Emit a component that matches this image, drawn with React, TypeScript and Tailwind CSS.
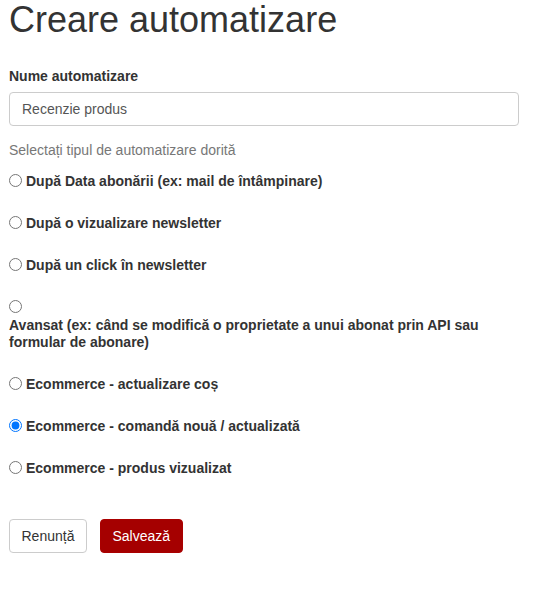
import React from "react";

const options = [
  { label: "După Data abonării (ex: mail de întâmpinare)" },
  { label: "După o vizualizare newsletter" },
  { label: "După un click în newsletter" },
  { label: "Avansat (ex: când se modifică o proprietate a unui abonat prin API sau formular de abonare)" },
  { label: "Ecommerce - actualizare coș" },
  { label: "Ecommerce - comandă nouă / actualizată", checked: true },
  { label: "Ecommerce - produs vizualizat" },
];

export default function App() {
  return (
    <div
      className="min-h-[590px] w-[545px] bg-white px-[9px] text-[14px] text-[#333]"
      style={{ fontFamily: '"Liberation Sans", Arial, sans-serif' }}
    >
      <h1 className="m-0 text-[36px] font-normal leading-[40px] text-[#333]">Creare automatizare</h1>
      <div className="mt-[26px] font-bold leading-5">Nume automatizare</div>
      <input
        type="text"
        defaultValue="Recenzie produs"
        className="mt-[6px] block h-[34px] w-[510px] rounded-[4px] border border-[#ccc] bg-white px-[12px] text-[14px] text-[#555] outline-none"
        style={{ fontFamily: '"Liberation Sans", Arial, sans-serif' }}
      />
      <div className="mt-[14px] leading-5 text-[#777]">Selectați tipul de automatizare dorită</div>
      <div className="mt-[11px] flex flex-col gap-[22px]">
        {options.map((o, i) => (
          <div key={i} className="leading-5">
            <input
              type="radio"
              name="tip"
              defaultChecked={o.checked}
              className="m-0 mr-[4px] h-[13px] w-[13px] align-[-1px]"
            />
            <label className="inline-block max-w-full font-bold leading-[17px]">{o.label}</label>
          </div>
        ))}
      </div>
      <div className="mt-[41px] flex gap-[13px]">
        <button className="h-[34px] rounded-[4px] border border-[#ccc] bg-white px-[11.5px] leading-5 text-[#333]">
          Renunță
        </button>
        <button className="h-[34px] rounded-[4px] border border-[#a00] bg-[#a50000] px-[11.5px] leading-5 text-white">
          Salvează
        </button>
      </div>
    </div>
  );
}
